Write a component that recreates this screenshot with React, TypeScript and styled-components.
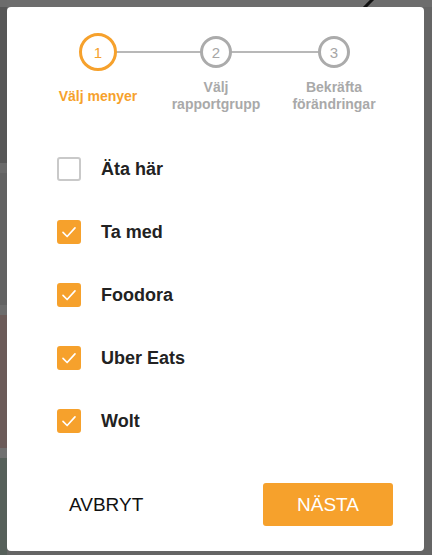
import styled, { createGlobalStyle } from "styled-components";

const ORANGE = "#f6a12c";

const GlobalStyle = createGlobalStyle`
  html, body {
    margin: 0;
    padding: 0;
  }
  body {
    width: 432px;
    height: 555px;
    overflow: hidden;
    font-family: "Liberation Sans", Arial, sans-serif;
    background:
      linear-gradient(
          to bottom,
          #6c6c6c 0,
          #6c6c6c 7px,
          #575757 7px,
          #575757 163px,
          #6a6a6a 163px,
          #6a6a6a 173px,
          #626262 173px,
          #626262 305px,
          #6c6c6c 305px,
          #6c6c6c 315px,
          #6b5b59 315px,
          #6b5b59 448px,
          #707070 448px,
          #707070 458px,
          #56605a 458px
        )
        left top / 7px 100% no-repeat,
      linear-gradient(to bottom, #6d6d6d 0, #6d6d6d 7px, #656565 7px);
  }
  * {
    box-sizing: border-box;
  }
`;

const Page = styled.div`
  position: relative;
  padding: 7px 8px 4px 7px;
`;

const BackdropIcon = styled.svg`
  position: absolute;
  top: 0;
  left: 358px;
`;

const Modal = styled.div`
  position: relative;
  width: 417px;
  height: 544px;
  background: #ffffff;
  border-radius: 4px;
  display: flex;
  flex-direction: column;
`;

const Stepper = styled.div`
  display: grid;
  grid-template-columns: repeat(3, 118px);
  justify-content: center;
  padding-top: 25px;
  padding-left: 1px;
`;

const Step = styled.div<{ $last?: boolean }>`
  position: relative;
  display: flex;
  flex-direction: column;
  align-items: center;

  &::after {
    content: "";
    display: ${(p) => (p.$last ? "none" : "block")};
    position: absolute;
    top: 19px;
    left: 50%;
    width: 100%;
    height: 2px;
    background: #b8b8b8;
    z-index: 0;
  }
`;

const CircleSlot = styled.div`
  height: 40px;
  display: flex;
  align-items: center;
  justify-content: center;
`;

const Circle = styled.div<{ $active?: boolean }>`
  position: relative;
  z-index: 1;
  width: ${(p) => (p.$active ? 38 : 32)}px;
  height: ${(p) => (p.$active ? 38 : 32)}px;
  border-radius: 50%;
  border: 3px solid ${(p) => (p.$active ? ORANGE : "#ababab")};
  background: #ffffff;
  color: ${(p) => (p.$active ? ORANGE : "#a6a6a6")};
  font-size: 15px;
  display: flex;
  align-items: center;
  justify-content: center;
`;

const StepLabel = styled.div<{ $active?: boolean }>`
  margin-top: 7px;
  height: 34px;
  display: flex;
  align-items: center;
  text-align: center;
  font-size: 14px;
  line-height: 17px;
  font-weight: 700;
  color: ${(p) => (p.$active ? ORANGE : "#a9a9a9")};
`;

const OptionList = styled.div`
  display: flex;
  flex-direction: column;
  gap: 39px;
  padding: 44px 0 0 50px;
`;

const Option = styled.label`
  display: flex;
  align-items: center;
  gap: 20px;
  height: 24px;
  font-size: 18px;
  font-weight: 700;
  color: #222222;
  cursor: pointer;
`;

const Box = styled.span<{ $checked?: boolean }>`
  width: 24px;
  height: 24px;
  border-radius: 3px;
  display: flex;
  align-items: center;
  justify-content: center;
  background: ${(p) => (p.$checked ? ORANGE : "#ffffff")};
  border: 2px solid ${(p) => (p.$checked ? ORANGE : "#c9c9c9")};
`;

const Footer = styled.div`
  margin-top: auto;
  display: flex;
  justify-content: space-between;
  align-items: center;
  padding: 0 31px 25px 50px;
`;

const TextButton = styled.button`
  height: 43px;
  padding: 0 12px;
  border: none;
  background: transparent;
  font-family: "Liberation Sans", Arial, sans-serif;
  font-size: 19px;
  color: #111111;
  cursor: pointer;
`;

const PrimaryButton = styled.button`
  width: 130px;
  height: 43px;
  border: none;
  border-radius: 3px;
  background: ${ORANGE};
  color: #ffffff;
  font-family: "Liberation Sans", Arial, sans-serif;
  font-size: 19px;
  cursor: pointer;
`;

const steps = [
  { n: 1, label: "Välj menyer" },
  { n: 2, label: "Välj\nrapportgrupp" },
  { n: 3, label: "Bekräfta\nförändringar" },
];

const options = [
  { label: "Äta här", checked: false },
  { label: "Ta med", checked: true },
  { label: "Foodora", checked: true },
  { label: "Uber Eats", checked: true },
  { label: "Wolt", checked: true },
];

function Check() {
  return (
    <svg width="18" height="18" viewBox="0 0 24 24" fill="none">
      <path
        d="M4 12.5 L9.5 18 L20 6.5"
        stroke="#ffffff"
        strokeWidth="2.2"
        strokeLinecap="round"
        strokeLinejoin="round"
      />
    </svg>
  );
}

export default function App() {
  return (
    <>
      <GlobalStyle />
      <Page>
        <BackdropIcon width="20" height="8" viewBox="0 0 20 8">
          <path d="M5 9 L15 -1" stroke="#111" strokeWidth="3" />
        </BackdropIcon>
        <Modal>
          <Stepper>
            {steps.map((s, i) => (
              <Step key={s.n} $last={i === steps.length - 1}>
                <CircleSlot>
                  <Circle $active={i === 0}>{s.n}</Circle>
                </CircleSlot>
                <StepLabel $active={i === 0}>
                  <span>
                    {s.label.split("\n").map((line, j) => (
                      <div key={j}>{line}</div>
                    ))}
                  </span>
                </StepLabel>
              </Step>
            ))}
          </Stepper>
          <OptionList>
            {options.map((o) => (
              <Option key={o.label}>
                <Box $checked={o.checked}>{o.checked && <Check />}</Box>
                {o.label}
              </Option>
            ))}
          </OptionList>
          <Footer>
            <TextButton>AVBRYT</TextButton>
            <PrimaryButton>NÄSTA</PrimaryButton>
          </Footer>
        </Modal>
      </Page>
    </>
  );
}
